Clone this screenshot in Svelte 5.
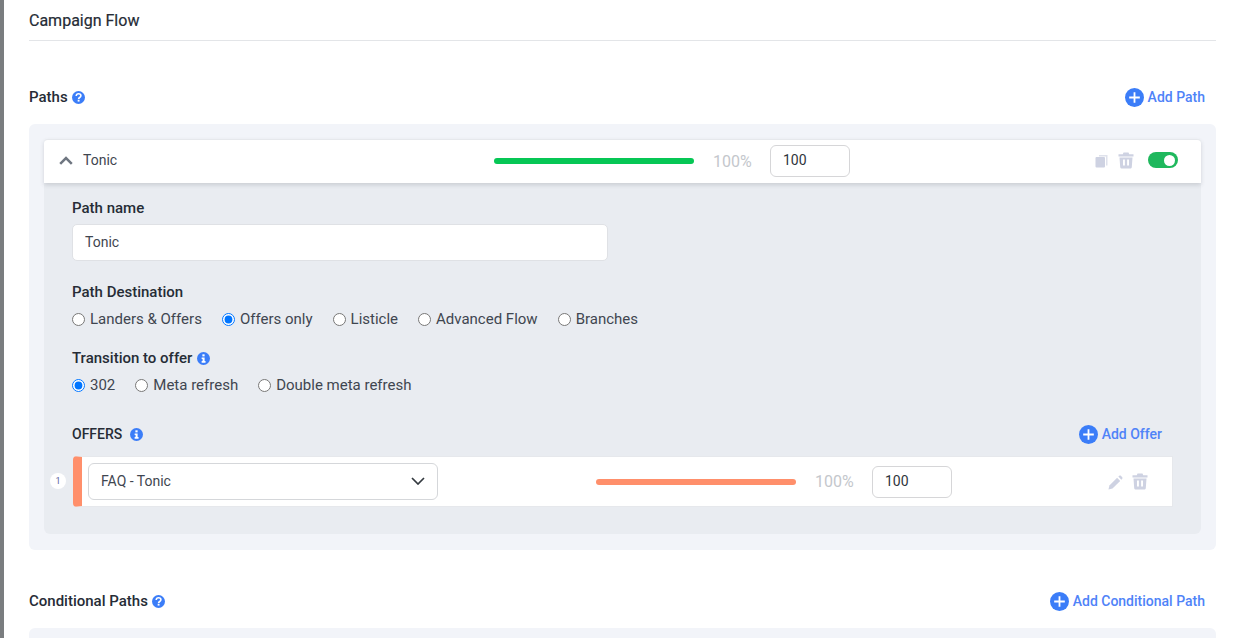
<script>
  const destinations = [
    { label: 'Landers & Offers', checked: false },
    { label: 'Offers only', checked: true },
    { label: 'Listicle', checked: false },
    { label: 'Advanced Flow', checked: false },
    { label: 'Branches', checked: false }
  ];
  const transitions = [
    { label: '302', checked: true },
    { label: 'Meta refresh', checked: false },
    { label: 'Double meta refresh', checked: false }
  ];
</script>

{#snippet plus()}
  <svg class="plus" viewBox="0 0 20 20" aria-hidden="true">
    <circle cx="10" cy="10" r="10" fill="#3b7df8" />
    <path d="M10 4.400v11.200M4.400 10h11.200" stroke="#fff" stroke-width="1.900" />
  </svg>
{/snippet}

{#snippet question()}
  <svg class="hint" viewBox="0 0 14 14" aria-hidden="true">
    <circle cx="7" cy="7" r="7" fill="#3b7df8" />
    <path d="M4.500 5.400C4.600 3.800 5.800 3 7.100 3c1.500 0 2.500.9 2.500 2.100 0 2-2.500 1.700-2.500 3.400" fill="none" stroke="#fff" stroke-width="1.700" />
    <rect x="6.100" y="9.400" width="2" height="2" fill="#fff" />
  </svg>
{/snippet}

{#snippet info()}
  <svg class="hint" viewBox="0 0 14 14" aria-hidden="true">
    <circle cx="7" cy="7" r="7" fill="#3b7df8" />
    <rect x="5.800" y="2.500" width="2.400" height="2.200" fill="#fff" />
    <path d="M5 5.800h3.200v4h1v1.700H5V9.800h1V7.500H5z" fill="#fff" />
  </svg>
{/snippet}

{#snippet trash()}
  <svg class="trash" viewBox="0 0 16 17" aria-hidden="true">
    <path d="M5.500 0.500h5l.7 1.800h4.300v2.200H.5V2.300h4.300z" fill="#ced2e2" />
    <path fill-rule="evenodd" d="M1.500 5.500h13l-.7 9.400c-.1.900-.8 1.600-1.700 1.600H3.900c-.9 0-1.600-.7-1.700-1.600zM5 7.500v6h1.900v-6zm4.100 0v6H11v-6z" fill="#ced2e2" />
  </svg>
{/snippet}

<div class="page">
  <aside class="strip"></aside>
  <main class="content">
    <h1 class="title">Campaign Flow</h1>

    <section class="section-head">
      <h2><span>Paths</span>{@render question()}</h2>
      <button class="add">{@render plus()}<span>Add Path</span></button>
    </section>

    <section class="panel">
      <div class="path-card">
        <div class="path-name">
          <svg class="chevron" viewBox="0 0 14 9" aria-hidden="true">
            <path d="M1.200 7.800 7 2l5.800 5.800" fill="none" stroke="#6f7681" stroke-width="2.500" />
          </svg>
          <span>Tonic</span>
        </div>
        <div class="weight path-weight">
          <div class="bar green"></div>
          <span class="pct">100%</span>
          <div class="num">100</div>
        </div>
        <div class="tools">
          <svg class="copy" viewBox="0 0 13 14" aria-hidden="true">
            <path d="M4 1h8.500v10.500H11V2.500H4z" fill="#dfe2ec" />
            <rect x="0.500" y="3" width="9.500" height="10.500" rx="1" fill="#ced2e2" />
          </svg>
          {@render trash()}
          <div class="toggle"><span></span></div>
        </div>
      </div>

      <div class="path-body">
        <div class="label first">Path name</div>
        <div class="text-input">Tonic</div>

        <div class="label dest">Path Destination</div>
        <div class="radios">
          {#each destinations as d}
            <label><input type="radio" name="dest" checked={d.checked} />{d.label}</label>
          {/each}
        </div>

        <div class="label trans"><span>Transition to offer</span>{@render info()}</div>
        <div class="radios">
          {#each transitions as t}
            <label><input type="radio" name="trans" checked={t.checked} />{t.label}</label>
          {/each}
        </div>

        <div class="offers-head">
          <div class="offers-title"><span>OFFERS</span>{@render info()}</div>
          <button class="add">{@render plus()}<span>Add Offer</span></button>
        </div>

        <div class="offer-row">
          <span class="index">1</span>
          <div class="offer-card">
            <div class="select">
              <span>FAQ - Tonic</span>
              <svg viewBox="0 0 14 8" aria-hidden="true">
                <path d="M1 1l6 6 6-6" fill="none" stroke="#343a40" stroke-width="1.700" />
              </svg>
            </div>
            <div class="weight offer-weight">
              <div class="bar orange"></div>
              <span class="pct">100%</span>
              <div class="num">100</div>
            </div>
            <div class="offer-tools">
              <svg class="pencil" viewBox="0 0 16 16" aria-hidden="true">
                <path d="M0.500 15.500l1-4.300L9.700 3l3.300 3.300-8.200 8.200z" fill="#ced2e2" />
                <path d="M11 1.700l.8-.7c.6-.6 1.500-.6 2.100 0l1.100 1.100c.6.600.6 1.500 0 2.100l-.8.800z" fill="#ced2e2" />
              </svg>
              {@render trash()}
            </div>
          </div>
        </div>
      </div>
    </section>

    <section class="section-head conditional">
      <h2><span>Conditional Paths</span>{@render question()}</h2>
      <button class="add">{@render plus()}<span>Add Conditional Path</span></button>
    </section>

    <div class="panel-stub"></div>
  </main>
</div>

<style>
  :global(body) {
    margin: 0;
    background: #fff;
    overflow: hidden;
  }

  .page {
    display: flex;
    height: 638px;
    overflow: hidden;
    font-family: Roboto, "Liberation Sans", sans-serif;
    font-size: 14px;
    color: #343a40;
  }

  .strip {
    flex: 0 0 4px;
    background: #7a7d7f;
  }

  .content {
    flex: 0 0 1187px;
    margin-left: 25px;
    min-width: 0;
  }

  .title {
    margin: 0;
    height: 40px;
    border-bottom: 1px solid #e3e5e8;
    font-size: 16px;
    font-weight: 400;
    line-height: 41px;
    color: #262c36;
    -webkit-text-stroke: 0.2px #262c36;
  }

  .section-head {
    display: flex;
    align-items: center;
    justify-content: space-between;
    height: 20px;
    margin-top: 46px;
    padding-right: 11px;
  }

  .section-head h2 {
    display: flex;
    align-items: center;
    gap: 4px;
    margin: 0;
    font-size: 15px;
    font-weight: 500;
    color: #262c36;
  }

  .hint {
    width: 13px;
    height: 13px;
    flex: none;
  }

  .add {
    display: flex;
    align-items: center;
    gap: 4px;
    padding: 0;
    border: 0;
    background: none;
    font: 500 14px Roboto, "Liberation Sans", sans-serif;
    color: #4f83f8;
  }

  .plus {
    width: 19px;
    height: 19px;
    flex: none;
  }

  .panel {
    margin-top: 17px;
    height: 396px;
    padding: 15px;
    border-radius: 6px;
    background: #f2f4f9;
  }

  .path-card {
    position: relative;
    z-index: 1;
    display: flex;
    align-items: center;
    height: 42px;
    padding-bottom: 1px;
    background: #fff;
    border-radius: 4px 4px 0 0;
    border-top: 1px solid #e6e8ec;
    box-shadow: 0 2px 4px rgba(60, 66, 80, 0.18);
  }

  .path-name {
    display: flex;
    align-items: center;
    gap: 10px;
    width: 450px;
    padding: 0 0 2px 15px;
    box-sizing: border-box;
    color: #3f4650;
  }

  .chevron {
    width: 14px;
    height: 9px;
  }

  .weight {
    display: flex;
    align-items: center;
  }

  .bar {
    width: 200px;
    height: 6px;
    border-radius: 3px;
  }

  .green {
    background: #06c755;
  }

  .orange {
    background: #ff8f6b;
  }

  .pct {
    margin-left: 19px;
    width: 37px;
    font-size: 16px;
    color: #c4c7cc;
  }

  .num {
    box-sizing: border-box;
    width: 80px;
    height: 32px;
    margin-left: 20px;
    padding-left: 12px;
    border: 1px solid #d6d6d8;
    border-radius: 6px;
    background: #fff;
    line-height: 29px;
    color: #2f353c;
  }

  .tools {
    display: flex;
    align-items: center;
    margin-left: auto;
    padding: 0 23px 2px 0;
  }

  .copy {
    width: 13px;
    height: 14px;
    margin-top: 1px;
  }

  .trash {
    width: 16px;
    height: 17px;
  }

  .tools .trash {
    margin-left: 10px;
  }

  .toggle {
    position: relative;
    width: 30px;
    height: 16px;
    margin-left: 14px;
    border-radius: 8px;
    background: #1fb85d;
  }

  .toggle span {
    position: absolute;
    top: 2.500px;
    right: 3px;
    width: 11px;
    height: 11px;
    border-radius: 50%;
    background: #fff;
  }

  .path-body {
    height: 351px;
    box-sizing: border-box;
    padding: 0 28px;
    background: #e9ecf1;
    border-radius: 0 0 6px 6px;
  }

  .label {
    display: flex;
    align-items: center;
    gap: 4px;
    height: 20px;
    font-size: 15px;
    font-weight: 500;
    color: #262c36;
  }

  .label.first {
    padding-top: 15px;
  }

  .text-input {
    box-sizing: border-box;
    width: 536px;
    height: 37px;
    margin-top: 6px;
    padding-left: 12px;
    border: 1px solid #dfe1e5;
    border-radius: 5px;
    background: #fff;
    line-height: 35px;
    color: #3f4650;
  }

  .label.dest {
    margin-top: 21px;
  }

  .label.trans {
    margin-top: 19px;
    gap: 5px;
  }

  .radios {
    display: flex;
    gap: 20px;
    margin-top: 7px;
    height: 20px;
  }

  .radios label {
    display: flex;
    align-items: center;
    gap: 5px;
    font-size: 15px;
    color: #3f4650;
  }

  .radios input {
    width: 13px;
    height: 13px;
    margin: 0;
  }

  .offers-head {
    display: flex;
    align-items: center;
    justify-content: space-between;
    height: 20px;
    margin-top: 29px;
    padding-right: 11px;
  }

  .offers-title {
    display: flex;
    align-items: center;
    gap: 8px;
    font-weight: 500;
    color: #262c36;
  }

  .offer-row {
    position: relative;
    margin-top: 12px;
  }

  .index {
    position: absolute;
    left: -22px;
    top: 17px;
    width: 16px;
    height: 16px;
    border-radius: 50%;
    background: #fff;
    font-size: 9px;
    line-height: 16px;
    text-align: center;
    color: #5a5f9e;
  }

  .offer-card {
    display: flex;
    align-items: center;
    box-sizing: border-box;
    width: 1100px;
    height: 51px;
    margin-left: 1px;
    border: 1px solid #e6e8ec;
    border-left: 9px solid #ff8f6b;
    border-radius: 4px 0 0 4px;
    background: #fff;
  }

  .select {
    display: flex;
    align-items: center;
    justify-content: space-between;
    box-sizing: border-box;
    width: 350px;
    height: 37px;
    margin-left: 6px;
    padding: 0 12px 1px 12px;
    border: 1px solid #d5d7da;
    border-radius: 6px;
    color: #3f4650;
  }

  .select svg {
    width: 14px;
    height: 8px;
  }

  .offer-weight {
    margin-left: 158px;
  }

  .offer-tools {
    display: flex;
    align-items: center;
    gap: 9px;
    margin-left: auto;
    padding-right: 24px;
  }

  .pencil {
    width: 15px;
    height: 15px;
    margin-top: 2px;
  }

  .conditional {
    margin-top: 41px;
  }

  .panel-stub {
    height: 40px;
    margin-top: 17px;
    border-radius: 6px;
    background: #f2f4f9;
  }
</style>
